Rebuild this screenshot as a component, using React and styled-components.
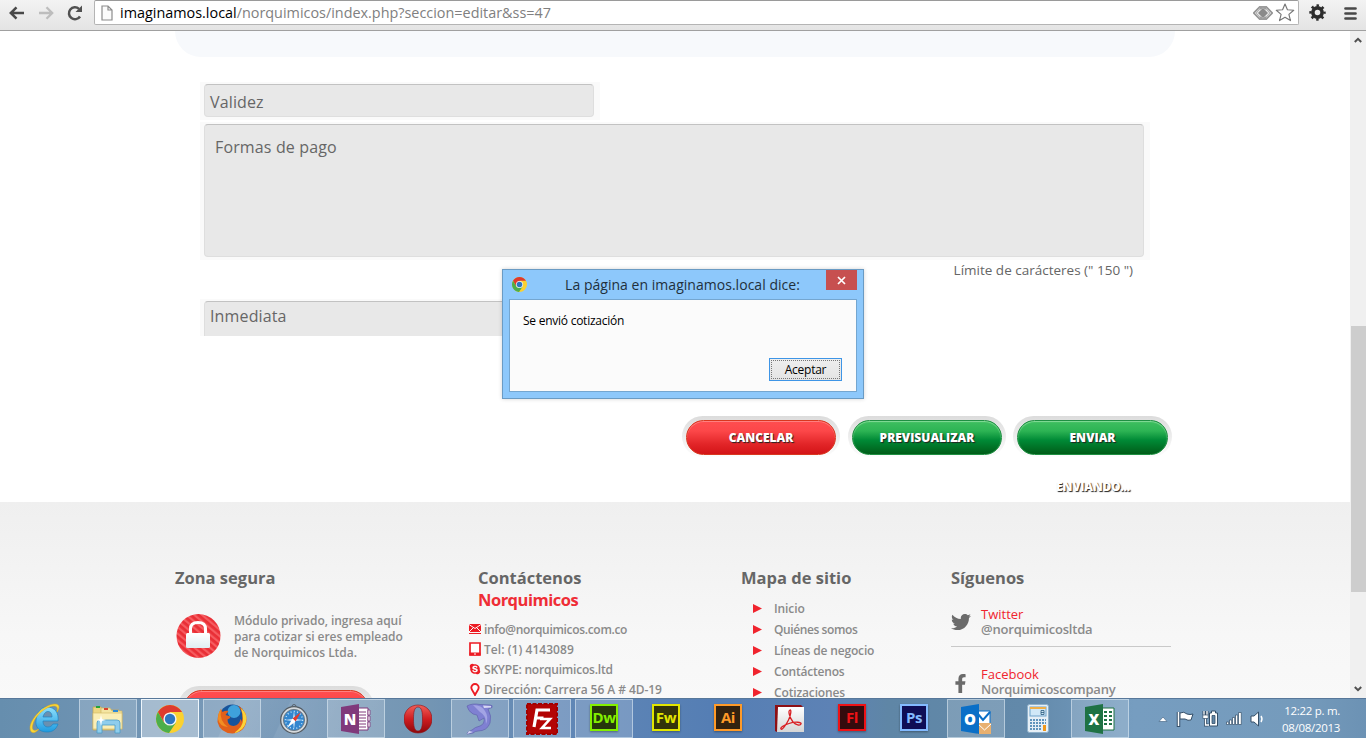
import React from 'react';
import styled, { createGlobalStyle, css } from 'styled-components';
import { FaTwitter, FaFacebookF, FaSkype } from 'react-icons/fa';

const Global = createGlobalStyle`
  * { box-sizing: border-box; }
  body { margin: 0; font-family: 'Open Sans', 'Noto Sans', sans-serif; overflow: hidden; }
  svg { display: block; flex: none; }
`;

const Screen = styled.div`
  width: 1366px;
  height: 738px;
  display: flex;
  flex-direction: column;
  position: relative;
  overflow: hidden;
  background: #fff;
`;

/* ---------- browser toolbar ---------- */
const Toolbar = styled.header`
  height: 31px;
  flex: none;
  display: flex;
  align-items: flex-start;
  background: linear-gradient(#f3f3f3, #e4e4e4);
  border-bottom: 1px solid #a0a0a0;
`;
const NavButtons = styled.div`
  width: 94px;
  height: 25px;
  padding-left: 9px;
  display: flex;
  align-items: center;
  gap: 13px;
`;
const Omnibox = styled.div`
  width: 1205px;
  height: 25px;
  padding: 0 3px 0 6px;
  display: flex;
  align-items: center;
  background: #fff;
  border: 1px solid #b4b4b4;
  border-top-color: #9a9a9a;
  border-radius: 2px;
`;
const Url = styled.div`
  flex: 1;
  padding-left: 7px;
  font-size: 14.4px;
  line-height: 20px;
  color: #808080;
  b { font-weight: 400; color: #000; }
`;
const OmniIcons = styled.div`display: flex; align-items: center; gap: 2px;`;
const ToolIcons = styled.div`
  height: 25px;
  padding-left: 10px;
  display: flex;
  align-items: center;
  gap: 18px;
`;

/* ---------- page ---------- */
const Viewport = styled.div`flex: 1; min-height: 0; display: flex;`;
const Page = styled.div`width: 1350px; height: 667px; overflow: hidden;`;
const Band = styled.div`
  width: 1000px;
  height: 26px;
  margin-left: 175px;
  background: #f7f9fc;
  border-radius: 0 0 26px 26px;
`;
const Form = styled.div`
  height: 445px;
  padding: 25px 0 0 200px;
  display: flex;
  flex-direction: column;
  align-items: flex-start;
`;
const Field = styled.div`
  width: ${(p) => p.$w}px;
  height: ${(p) => p.$h}px;
  margin-top: ${(p) => p.$mt || 0}px;
  padding: 2px 6px ${(p) => (p.$cut ? 0 : 3)}px 4px;
  background: #fafafa;
`;
const Input = styled.div`
  height: 100%;
  padding: ${(p) => p.$pad};
  background: #e8e8e8;
  border: 1px solid #dedede;
  border-top: 1px solid #c2c2c2;
  border-radius: 4px;
  ${(p) => p.$cut && css`border-bottom: 0; border-radius: 4px 4px 0 0;`}
  font-size: 16px;
  line-height: 22px;
  letter-spacing: 0.14px;
  color: #666;
`;
const Limit = styled.div`
  width: 933px;
  height: 20px;
  text-align: right;
  font-size: 13.5px;
  line-height: 20px;
  color: #666;
`;
const Actions = styled.div`
  margin: 80px 0 0 482px;
  display: grid;
  grid-template-columns: 158px 160px 160px;
  column-gap: 6px;
  > :nth-child(2) { margin-left: 2px; }
  > :nth-child(3) { margin-left: 1px; }
`;
const PillShell = styled.div`
  height: ${(p) => p.$h || 41}px;
  width: ${(p) => (p.$w ? `${p.$w}px` : 'auto')};
  padding: 4px ${(p) => p.$px || 4}px 2px;
  border-radius: 21px;
  background: linear-gradient(#dcdcdc, #f0f0f0 60%, #fdfdfd);
`;
const Pill = styled.div`
  height: 35px;
  border-radius: 18px;
  font-size: 12px;
  font-weight: 800;
  line-height: 34px;
  text-align: center;
  color: #fff;
  text-shadow: 1px 1px 1px #222;
  ${(p) => p.$red ? css`
    background: linear-gradient(#ff4e50, #fc4749 30%, #e22528 70%, #d31417);
    border: 1px solid #d9371f;
    box-shadow: inset 0 1px 0 #ff8080;
  ` : css`
    background: linear-gradient(#3fbf60, #2db454 30%, #008a36 58%, #005c18);
    border: 1px solid #1f8f42;
    box-shadow: inset 0 1px 1px #86dc9a;
  `}
`;
const Sending = styled.div`
  width: 160px;
  margin: 20px 0 0 813px;
  text-align: center;
  font-size: 12px;
  font-weight: 800;
  line-height: 19px;
  letter-spacing: -0.25px;
  color: #fff;
  text-shadow: 1px 1px 1px #222;
`;

/* ---------- footer ---------- */
const Footer = styled.footer`
  height: 240px;
  padding: 65px 0 0 175px;
  display: grid;
  grid-template-columns: 293px 273px 210px 220px;
  background: linear-gradient(#efefef, #f7f7f7 55%, #fafafa);
`;
const Heading = styled.h3`
  margin: 0;
  padding-left: ${(p) => p.$indent || 0}px;
  font-size: 16.5px;
  font-weight: 700;
  line-height: 22px;
  color: ${(p) => (p.$red ? '#ef2d36' : '#666')};
  letter-spacing: ${(p) => (p.$red ? '-0.5px' : '0')};
`;
const Secure = styled.div`display: flex; padding: 25px 0 0 1px; gap: 13px;`;
const SecureText = styled.p`
  margin: -1px 0 0;
  font-size: 12px;
  font-weight: 600;
  line-height: 16px;
  letter-spacing: -0.05px;
  color: #8a8a8a;
`;
const SecureButton = styled.div`margin: 25px 0 0 3px;`;
const ContactList = styled.ul`list-style: none; margin: 8px 0 0; padding: 0;`;
const ContactItem = styled.li`
  height: 20px;
  display: grid;
  grid-template-columns: 13px 1fr;
  column-gap: 3px;
  align-items: center;
  font-size: 12px;
  font-weight: 600;
  letter-spacing: ${(p) => p.$ls}px;
  color: #8a8a8a;
  svg { justify-self: center; }
`;
const SiteList = styled.ul`list-style: none; margin: 9px 0 0 12px; padding: 0;`;
const SiteItem = styled.li`
  height: 21px;
  display: flex;
  align-items: center;
  gap: 12px;
  font-size: 12px;
  font-weight: 600;
  letter-spacing: ${(p) => p.$ls}px;
  color: #8a8a8a;
`;
const Social = styled.div`
  height: 58px;
  padding-top: ${(p) => p.$top}px;
  display: grid;
  grid-template-columns: 30px 1fr;
  grid-template-rows: 30px;
  align-items: center;
  font-size: 13px;
  font-weight: 600;
  line-height: 15px;
  letter-spacing: -0.2px;
  color: #8a8a8a;
  ${(p) => p.$line && css`border-bottom: 1px solid #c9c9c9;`}
  b { display: block; font-weight: 500; letter-spacing: 0; color: #f0242e; }
`;
const FacebookMark = styled.div`padding: 3px 0 0;`;

/* ---------- scrollbar ---------- */
const Scrollbar = styled.div`
  width: 16px;
  display: flex;
  flex-direction: column;
  align-items: center;
  background: #f0f0f0;
`;
const ScrollArrow = styled.div`height: 18px; width: 16px; display: grid; place-items: center;`;
const Thumb = styled.div`width: 15px; height: 266px; margin: 277px 0 auto; background: #cdcdcd;`;

/* ---------- dialog ---------- */
const Dialog = styled.div`
  position: absolute;
  left: 502px;
  top: 269px;
  width: 362px;
  height: 130px;
  padding: 0 6px 6px;
  background: #8dc8fb;
  border: 1px solid #6a9bc4;
  box-shadow: 0 0 4px rgba(0, 0, 0, 0.18);
`;
const TitleBar = styled.div`
  height: 29px;
  display: flex;
  align-items: flex-start;
  justify-content: space-between;
  padding-left: 3px;
  > svg { margin-top: 7px; }
`;
const Title = styled.div`
  padding-left: 12px;
  font-size: 14px;
  line-height: 30px;
  letter-spacing: 0.03px;
  color: #22303c;
`;
const CloseButton = styled.div`
  width: 31px;
  height: 20px;
  display: grid;
  place-items: center;
  background: #c75050;
`;
const DialogBody = styled.div`
  height: 93px;
  padding: 12px 14px 10px 13px;
  display: flex;
  flex-direction: column;
  justify-content: space-between;
  background: #fbfbfb;
  border: 1px solid #74a6d0;
  font-size: 12px;
  line-height: 18px;
  letter-spacing: -0.25px;
  color: #000;
`;
const Accept = styled.div`
  align-self: flex-end;
  width: 73px;
  height: 23px;
  padding: 1px;
  background: linear-gradient(#efefef, #e3e3e3);
  border: 1px solid #3e95e6;
`;
const Focus = styled.div`height: 19px; border: 1px dotted #777; text-align: center; line-height: 17px;`;

/* ---------- taskbar ---------- */
const Taskbar = styled.div`
  height: 40px;
  flex: none;
  display: flex;
  padding: 0 26px 0 17px;
  border-top: 1px solid #58789a;
  background:
    linear-gradient(115deg, transparent 17%, rgba(255,255,255,.09) 17.1%, transparent 21%, rgba(255,255,255,.07) 21.1%, transparent 28%),
    linear-gradient(90deg, #668eae, #7597b6 14%, #7d9dbb 22%, #7496b3 31%, #6288b6 40%, #557eb4 52%, #5d82b5 61%, #5f86a6 65%, #6289aa 75%, #769dc0 83%, #759bbc 95%, #6c92b4);
`;
const Tasks = styled.div`display: flex; gap: 4px;`;
const Task = styled.div`
  width: 58px;
  height: 39px;
  display: grid;
  place-items: center;
  border: 1px solid transparent;
  ${(p) => p.$open && css`
    background: rgba(255, 255, 255, 0.18);
    border-color: rgba(225, 238, 248, 0.55);
  `}
  ${(p) => p.$active && css`
    background: rgba(255, 255, 255, 0.36);
    border-color: #eef6fc;
  `}
`;
const AppTile = styled.div`
  width: 28px;
  height: 27px;
  margin-top: -3px;
  border: 2px solid ${(p) => p.$c};
  background: ${(p) => p.$bg};
  color: ${(p) => p.$c};
  font: 700 15px/22px 'Open Sans', sans-serif;
  letter-spacing: -0.4px;
  text-align: center;
  box-shadow: 0 1px 2px rgba(0, 0, 0, 0.35);
`;
const Tray = styled.div`
  margin-left: auto;
  display: flex;
  align-items: center;
`;
const TrayIcons = styled.div`
  display: grid;
  grid-template-columns: 12px 20px 18px 18px 16px;
  column-gap: 6px;
  place-items: center;
  align-items: center;
`;
const Clock = styled.div`
  width: 75px;
  text-align: right;
  font-size: 11.5px;
  line-height: 17px;
  letter-spacing: -0.3px;
  color: #fff;
`;

const ChromeLogo = ({ size }) => (
  <svg width={size} height={size} viewBox="0 0 28 28">
    <circle cx="14" cy="14" r="14" fill="#fbd12f" />
    <path d="M14 7H26.100A14 14 0 0 0 1.900 7L8 17.500Z" fill="#de3a2e" />
    <path d="M1.900 7A14 14 0 0 0 13 28L20 17.500 8 17.500Z" fill="#4cae4a" />
    <circle cx="14" cy="14" r="6.600" fill="#f3f3f3" />
    <circle cx="14" cy="14" r="5.200" fill="#2d76c0" />
  </svg>
);

const IE = () => (
  <svg width="34" height="32" viewBox="0 0 34 32">
    <defs><linearGradient id="ieb" x1="0" y1="0" x2="0" y2="1"><stop offset="0" stopColor="#8fe0fb" /><stop offset="1" stopColor="#1f9be0" /></linearGradient></defs>
    <path fillRule="evenodd" d="M18 4c8 0 12 6 11 14H14c0 4 2 6 5 6 2 0 4-1 5-3h5c-2 6-6 8-11 8C10 29 6 24 7 17 8 9 12 4 18 4Zm-4 10h9c0-4-2-5.500-4-5.500S15 10 14 14Z" fill="url(#ieb)" stroke="#1b85c4" strokeWidth=".7" />
    <path d="M28 9c1-4 0-6-3-6C17 3 6 13 4 21c-2 6 1 8 6 5-4 5-9 5-9-1C1 16 15 1 26 1c5 0 5 4 2 8Z" fill="#fbd736" stroke="#dca61b" strokeWidth=".5" />
  </svg>
);
const Explorer = () => (
  <svg width="34" height="30" viewBox="0 0 34 30">
    <path d="M2 3h8l2 3h16v20H2Z" fill="#ecd682" stroke="#c3a550" strokeWidth=".7" />
    <path d="M10 4h9l2 3h10v18H10Z" fill="#f4e5a2" stroke="#cdb466" strokeWidth=".7" />
    <path d="M5 2h4v2H5z" fill="#26a33a" /><path d="M13 4h4v2h-4z" fill="#d9412e" /><path d="M22 6h5v2h-5z" fill="#2d8ad6" />
    <path d="M2 9h29v16H2Z" fill="#faeeb6" stroke="#d6bd6b" strokeWidth=".7" />
    <path d="M6 29V19q0-3 3-3h17q3 0 3 3v10h-5v-8H11v8Z" fill="#8fcdec" stroke="#4d9cc8" strokeWidth=".8" />
    <path d="m10 11 1 4 4 1-4 1-1 5-1-5-4-1 4-1Z" fill="#fff" />
  </svg>
);
const Firefox = () => (
  <svg width="30" height="30" viewBox="0 0 30 30">
    <circle cx="15.500" cy="13.500" r="13" fill="#17549b" />
    <circle cx="17" cy="7.500" r="6.500" fill="#3fa2dc" />
    <path d="M22 2q8 6 7.500 14-1 12-14 13.500Q3 29 .5 18 .5 10 4 5l1.500 3q3-2 6-1l-3 4 5 1.500q0 2-3 3 0 6 6 6.500 6-1 7-7 1 1 1 3 3-8-3-16Z" fill="#e2601a" />
    <path d="M24 4q7 6 5 14-2 9-12 11 9-6 9-13 0-6-2-12Z" fill="#fbd338" />
    <path d="M4 5q-2 12 7 18-9-1-10-8Q1 9 4 5Z" fill="#f28e22" />
  </svg>
);
const Safari = () => (
  <svg width="28" height="30" viewBox="0 0 28 30">
    <circle cx="14" cy="2.500" r="2" fill="none" stroke="#58636d" />
    <circle cx="14" cy="16" r="13.300" fill="#d5d9dc" stroke="#545c63" strokeWidth="1.300" />
    <circle cx="14" cy="16" r="10.600" fill="#3286cf" stroke="#6f7d88" />
    <circle cx="14" cy="16" r="8.500" fill="none" stroke="#bfe0f7" strokeWidth="1.500" strokeDasharray="1 2.300" />
    <path d="m14 7 1 8 8 1-8 1-1 8-1-8-8-1 8-1Z" fill="#e5f2fb" />
    <path d="M21 8 15.500 17.500 12.500 14.500Z" fill="#e23b2d" /><path d="M7 24 15.500 17.500 12.500 14.500Z" fill="#fff" />
  </svg>
);
const OfficeDoor = ({ color, letter, children }) => (
  <svg width="30" height="30" viewBox="0 0 30 30">
    {children}
    <path d="M0 3 18 0V30L0 27Z" fill={color} />
    <text x="9" y="20.500" textAnchor="middle" fontFamily="Open Sans, sans-serif" fontWeight="800" fontSize="15" fill="#fff">{letter}</text>
  </svg>
);
const Opera = () => (
  <svg width="28" height="30" viewBox="0 0 28 30">
    <defs><linearGradient id="op" x1="0" y1="0" x2="0" y2="1"><stop offset="0" stopColor="#f0605a" /><stop offset=".5" stopColor="#cf1d20" /><stop offset="1" stopColor="#8d070b" /></linearGradient></defs>
    <path fillRule="evenodd" d="M14 1c8 0 14 6 14 14s-6 14-14 14S0 23 0 15 6 1 14 1Zm0 2c-4 0-4.500 6-4.500 12S10 27 14 27s4.500-6 4.500-12S18 3 14 3Z" fill="url(#op)" stroke="#8b1014" strokeWidth=".6" />
  </svg>
);
const Dolphin = () => (
  <svg width="28" height="32" viewBox="0 0 28 32">
    <path d="M1 3Q6 0 14 1.500L24 2q3 0 2 2.500L22 6q4 7 2 14-3 8-12 8-3 0-5 2l-6 1 1-2 4-2q3-3 8-4 5-2 4-8l-5 3-2-6-4-1Q2 8 1 3Z" fill="#7f80d2" stroke="#6263ae" strokeWidth=".7" />
    <path d="M17 2.500 25 3v1.500L18 5ZM1 31l2-3 4 1Z" fill="#d7d8f3" />
    <path d="M7 2q9 0 12 6 4 6 1 13 0-9-6-12Z" fill="#a3a4e4" />
  </svg>
);
const FileZilla = () => (
  <svg width="32" height="32" viewBox="0 0 32 32">
    <rect x="1" y="1" width="30" height="30" fill="#b30404" />
    <rect x="1" y="1" width="30" height="30" fill="none" stroke="#a30000" strokeWidth="2" strokeDasharray="4 1.500" />
    <path d="M8 24 11 7h13M9.500 15h8" fill="none" stroke="#fff" strokeWidth="3.200" />
    <path d="M14 16h10l-8 9h9" fill="none" stroke="#fff" strokeWidth="2.600" />
  </svg>
);
const Acrobat = () => (
  <svg width="30" height="28" viewBox="0 0 30 28">
    <defs><linearGradient id="ac" x1="0" y1="0" x2="0" y2="1"><stop offset="0" stopColor="#fff" /><stop offset="1" stopColor="#d5d5d5" /></linearGradient></defs>
    <path d="M0 0h26l3 3v24H2L0 26Z" fill="#8d1015" /><path d="M3 2h26v25H2Z" fill="url(#ac)" />
    <path d="M15 5c-2.500 1 0 8 3 12 3 3 7 4 8 2s-6-2.500-12-.5S5 22.500 6 24s5-4 7.500-9 3-10.500 1.500-10Z" fill="none" stroke="#d91e22" strokeWidth="1.300" />
  </svg>
);
const Calculator = () => (
  <svg width="22" height="30" viewBox="0 0 22 30">
    <rect x=".5" y=".5" width="21" height="28" rx="2" fill="#e6eff6" stroke="#8eb0ca" />
    <rect x="3" y="3" width="16" height="9" fill="#d1e8f7" stroke="#6fa3ca" /><path d="M3 3h16v2H3z" fill="#edaf4b" />
    <path d="M14 6.500h3v4h-3zM14 8.500h3" fill="none" stroke="#27587c" strokeWidth=".8" />
    <path d="M3 16h16M3 19h16M3 22h12M3 25h12" stroke="#5f94bd" strokeWidth="2" strokeDasharray="2 1" />
    <path d="M16 21h3v6h-3z" fill="#f0981c" />
  </svg>
);
const Lock = () => (
  <svg width="45" height="45" viewBox="0 0 45 45">
    <defs>
      <pattern id="st" width="5" height="5" patternUnits="userSpaceOnUse" patternTransform="rotate(-50)"><path d="M0 0h5v5H0z" fill="#e92f36" /><path d="M0 0h2.200v5H0z" fill="#f65c60" /></pattern>
      <linearGradient id="lk" x1="0" y1="0" x2="0" y2="1"><stop offset="0" stopColor="#fff" /><stop offset="1" stopColor="#e0eef3" /></linearGradient>
    </defs>
    <circle cx="22.500" cy="22" r="22" fill="url(#st)" />
    <path d="M14.500 20v-5q0-6.500 7.500-6.500t7.500 6.500v5" fill="none" stroke="#fff" strokeWidth="3" />
    <rect x="10" y="19" width="24" height="15" rx="1.500" fill="url(#lk)" />
  </svg>
);
const Gear = () => (
  <svg width="17" height="17" viewBox="0 0 17 17">
    <circle cx="8.500" cy="8.500" r="4.600" fill="none" stroke="#2d2d2d" strokeWidth="3.600" />
    <circle cx="8.500" cy="8.500" r="7" fill="none" stroke="#2d2d2d" strokeWidth="2.400" strokeDasharray="2.500 3" strokeDashoffset="1.250" />
  </svg>
);

const siteLinks = [['Inicio', -0.1], ['Quiénes somos', -0.4], ['Líneas de negocio', -0.16], ['Contáctenos', -0.2], ['Cotizaciones', -0.15]];

export default function App() {
  return (
    <Screen>
      <Global />
      <Toolbar>
        <NavButtons>
          <svg width="16" height="16" viewBox="0 0 16 16"><path d="M15 8H2M7.500 2.300 1.800 8l5.700 5.700" fill="none" stroke="#484848" strokeWidth="2.500" /></svg>
          <svg width="16" height="16" viewBox="0 0 16 16"><path d="M1 8h13M8.500 2.300 14.200 8l-5.700 5.700" fill="none" stroke="#bdbdbd" strokeWidth="2.300" /></svg>
          <svg width="16" height="16" viewBox="0 0 16 16"><path d="M13 11.500A6 6 0 1 1 12 3.800" fill="none" stroke="#505050" strokeWidth="2.500" /><path d="M15 .5V7H8.500Z" fill="#505050" /></svg>
        </NavButtons>
        <Omnibox>
          <svg width="12" height="16" viewBox="0 0 12 16"><path d="M1 1h6l4 4v10H1ZM7 1v4h4" fill="#fbfbfb" stroke="#8c8c8c" strokeWidth="1.200" /></svg>
          <Url><b>imaginamos.local</b>/norquimicos/index.php?seccion=editar&amp;ss=47</Url>
          <OmniIcons>
            <svg width="20" height="16" viewBox="0 0 20 16"><path d="M7 1.500.8 8 7 14.500M13 1.500 19.200 8 13 14.500" fill="none" stroke="#949494" strokeWidth="1.700" /><path d="m7.500 3-4.500 5 4.500 5M12.500 3 17 8l-4.500 5" fill="none" stroke="#b4b4b4" strokeWidth="1.200" /><path d="M6 1h8l-1 3.500H7ZM6 15h8l-1-3.500H7Z" fill="#9c9c9c" /><path d="M10 2.800 15.200 8 10 13.200 4.800 8Z" fill="#8a8a8a" stroke="#c4c4c4" strokeWidth=".6" /></svg>
            <svg width="20" height="19" viewBox="0 0 19 18"><path d="m9.500 1 2.300 5.400 6 .5-4.600 3.900 1.500 5.900-5.200-3.100-5.200 3.100 1.500-5.900-4.600-3.900 6-.5Z" fill="#fff" stroke="#777" strokeWidth="1.100" strokeLinejoin="round" /></svg>
          </OmniIcons>
        </Omnibox>
        <ToolIcons>
          <Gear />
          <svg width="13" height="14" viewBox="0 0 13 14"><path d="M1.500 2.500h10M1.500 7.500h10M1.500 12.500h10" stroke="#484848" strokeWidth="2.700" strokeLinecap="round" /></svg>
        </ToolIcons>
      </Toolbar>

      <Viewport>
        <Page>
          <Band />
          <Form>
            <Field $w={400} $h={38}><Input $pad="6px 5px">Validez</Input></Field>
            <Field $w={950} $h={138} $mt={2}><Input $pad="11px 10px">Formas de pago</Input></Field>
            <Limit>Límite de carácteres (" 150 ")</Limit>
            <Field $w={400} $h={37} $mt={19} $cut><Input $cut $pad="3px 5px">Inmediata</Input></Field>
            <Actions>
              <PillShell><Pill $red>CANCELAR</Pill></PillShell>
              <PillShell><Pill>PREVISUALIZAR</Pill></PillShell>
              <PillShell><Pill>ENVIAR</Pill></PillShell>
            </Actions>
            <Sending>ENVIANDO...</Sending>
          </Form>
          <Footer>
            <section>
              <Heading>Zona segura</Heading>
              <Secure>
                <Lock />
                <SecureText>Módulo privado, ingresa aquí<br />para cotizar si eres empleado<br />de Norquimicos Ltda.</SecureText>
              </Secure>
              <SecureButton><PillShell $w={196} $h={43} $px={6}><Pill $red /></PillShell></SecureButton>
            </section>
            <section>
              <Heading $indent={10}>Contáctenos</Heading>
              <Heading $indent={10} $red>Norquimicos</Heading>
              <ContactList>
                <ContactItem $ls={-0.32}>
                  <svg width="12" height="12" viewBox="0 0 12 12"><path d="M0 1h12v8H0z" fill="#ed1c24" /><path d="m0 1.500 6 4 6-4M0 9l4-4M12 9 8 5" fill="none" stroke="#fafafa" /><path d="M0 10.500h12" stroke="#ed1c24" /></svg>
                  info@norquimicos.com.co
                </ContactItem>
                <ContactItem $ls={0.05}>
                  <svg width="12" height="14" viewBox="0 0 12 14"><path d="M1 1h10v12H1z" fill="#fff" stroke="#ed1c24" strokeWidth="1.700" /><path d="M.5 10.500h11v3H.5z" fill="#ed1c24" /><path d="M5 12h2" stroke="#fff" /></svg>
                  Tel: (1) 4143089
                </ContactItem>
                <ContactItem $ls={-0.2}><FaSkype size={12} color="#ed1c24" />SKYPE: norquimicos.ltd</ContactItem>
                <ContactItem $ls={-0.07}>
                  <svg width="10" height="13" viewBox="0 0 10 13"><path d="M5 12C4 9 1.300 7 1.300 4.700a3.700 3.700 0 0 1 7.400 0C8.700 7 6 9 5 12Z" fill="#fff" stroke="#ed1c24" strokeWidth="1.900" /></svg>
                  Dirección: Carrera 56 A # 4D-19
                </ContactItem>
              </ContactList>
            </section>
            <section>
              <Heading>Mapa de sitio</Heading>
              <SiteList>
                {siteLinks.map(([label, ls]) => (
                  <SiteItem key={label} $ls={ls}>
                    <svg width="9" height="9" viewBox="0 0 9 9"><path d="M0 0 9 4.500 0 9Z" fill="#f0242e" /></svg>
                    {label}
                  </SiteItem>
                ))}
              </SiteList>
            </section>
            <section>
              <Heading>Síguenos</Heading>
              <Social $line $top={18}><FaTwitter size={20} color="#6b6b6b" /><div><b>Twitter</b>@norquimicosltda</div></Social>
              <Social $top={20}><FacebookMark><FaFacebookF size={19} color="#6b6b6b" /></FacebookMark><div><b>Facebook</b>Norquimicoscompany</div></Social>
            </section>
          </Footer>
        </Page>
        <Scrollbar>
          <ScrollArrow><svg width="8" height="6" viewBox="0 0 8 6"><path d="m.8 5 3.200-3.200L7.200 5" fill="none" stroke="#505050" strokeWidth="2" /></svg></ScrollArrow>
          <Thumb />
          <ScrollArrow><svg width="8" height="6" viewBox="0 0 8 6"><path d="m.8 1 3.200 3.200L7.200 1" fill="none" stroke="#505050" strokeWidth="2" /></svg></ScrollArrow>
        </Scrollbar>
      </Viewport>

      <Taskbar>
        <Tasks>
          <Task><IE /></Task>
          <Task $open><Explorer /></Task>
          <Task $open $active><ChromeLogo size={28} /></Task>
          <Task $open><Firefox /></Task>
          <Task><Safari /></Task>
          <Task $open>
            <OfficeDoor color="#80397b" letter="N"><path d="M16 4h11v22H16z" fill="#fff" stroke="#80397b" /><path d="M18 8h7M18 11h7M18 14h7M18 17h7M18 20h7M18 23h7" stroke="#80397b" /><path d="M27 6h2v5h-2zM27 12h2v5h-2zM27 18h2v5h-2z" fill="#fff" stroke="#80397b" strokeWidth=".8" /></OfficeDoor>
          </Task>
          <Task><Opera /></Task>
          <Task $open><Dolphin /></Task>
          <Task $open><FileZilla /></Task>
          <Task $open><AppTile $c="#83ef00" $bg="#26370c">Dw</AppTile></Task>
          <Task><AppTile $c="#e2e600" $bg="#33340a">Fw</AppTile></Task>
          <Task><AppTile $c="#ff9a28" $bg="#33220f">Ai</AppTile></Task>
          <Task><Acrobat /></Task>
          <Task><AppTile $c="#ee1216" $bg="#350b0d">Fl</AppTile></Task>
          <Task><AppTile $c="#83baff" $bg="#0f0e56">Ps</AppTile></Task>
          <Task $open>
            <OfficeDoor color="#0a6fc7" letter="O"><path d="M17 7h12v14H17z" fill="#fff" stroke="#0a6fc7" /><path d="m17 10 5 6 7-8" fill="none" stroke="#0a6fc7" strokeWidth="2" /><path d="M16 19h14v11H16z" fill="#e8b070" /><path d="m17 20 6.500 6 6.500-6" fill="none" stroke="#fff" /></OfficeDoor>
          </Task>
          <Task><Calculator /></Task>
          <Task $open>
            <OfficeDoor color="#1f7244" letter="X"><path d="M16 4h13v22H16z" fill="#fff" stroke="#1f7244" /><path d="M19 7h3v2h-3zM24 7h3v2h-3zM19 11h3v2h-3zM24 11h3v2h-3zM19 15h3v2h-3zM24 15h3v2h-3zM19 19h3v2h-3zM24 19h3v2h-3z" fill="#1f7244" /></OfficeDoor>
          </Task>
        </Tasks>
        <Tray>
          <TrayIcons>
            <svg width="10" height="6" viewBox="0 0 10 6"><path d="M1 5.500 5 1l4 4.500Z" fill="#fff" stroke="#4c6c8a" strokeWidth=".7" /></svg>
            <svg width="18" height="18" viewBox="0 0 18 18"><path d="M2.500 17V2" stroke="#344f68" strokeWidth="3.500" /><path d="M4 3q4-2 7 1 3 1 6 0l-2 6q-3 1-6-1H4Z" fill="#fff" stroke="#344f68" /><path d="M2.500 16V2" stroke="#fff" strokeWidth="1.500" /></svg>
            <svg width="16" height="17" viewBox="0 0 16 17"><path d="M2 1v4M5 1v4M3.500 8v7h3" fill="none" stroke="#344f68" strokeWidth="3" /><path d="M2 1v4M5 1v4M3.500 8v7h4" fill="none" stroke="#fff" strokeWidth="1.300" /><path d="M.8 5h5.400v3.500H.8z" fill="#fff" stroke="#344f68" strokeWidth=".7" /><path d="M7.500 3h2V1h4v2h2v13h-8Z" fill="#fff" stroke="#344f68" /><path d="M10 5.500h3v8h-3z" fill="#6286a6" stroke="#344f68" strokeWidth=".8" /></svg>
            <svg width="16" height="13" viewBox="0 0 16 13"><path d="M.5 10h2.200v2.500H.5zM3.500 8h2.200v4.500H3.500zM6.500 5.500h2.200v7H6.500zM9.500 3h2.200v9.500H9.500zM12.500.5h2.800v12h-2.800z" fill="#fff" stroke="#344f68" strokeWidth=".7" /></svg>
            <svg width="14" height="16" viewBox="0 0 14 16"><path d="M1 5h3l4.500-4v14L4 11H1Z" fill="#fff" stroke="#344f68" /><path d="M11 5q2 3 0 6" fill="none" stroke="#fff" strokeWidth="1.400" /></svg>
          </TrayIcons>
          <Clock>12:22 p. m.<br />08/08/2013</Clock>
        </Tray>
      </Taskbar>

      <Dialog>
        <TitleBar>
          <ChromeLogo size={15} />
          <Title>La página en imaginamos.local dice:</Title>
          <CloseButton><svg width="9" height="9" viewBox="0 0 9 9"><path d="m1 1 7 7M8 1 1 8" stroke="#fff" strokeWidth="1.700" /></svg></CloseButton>
        </TitleBar>
        <DialogBody>
          Se envió cotización
          <Accept><Focus>Aceptar</Focus></Accept>
        </DialogBody>
      </Dialog>
    </Screen>
  );
}
